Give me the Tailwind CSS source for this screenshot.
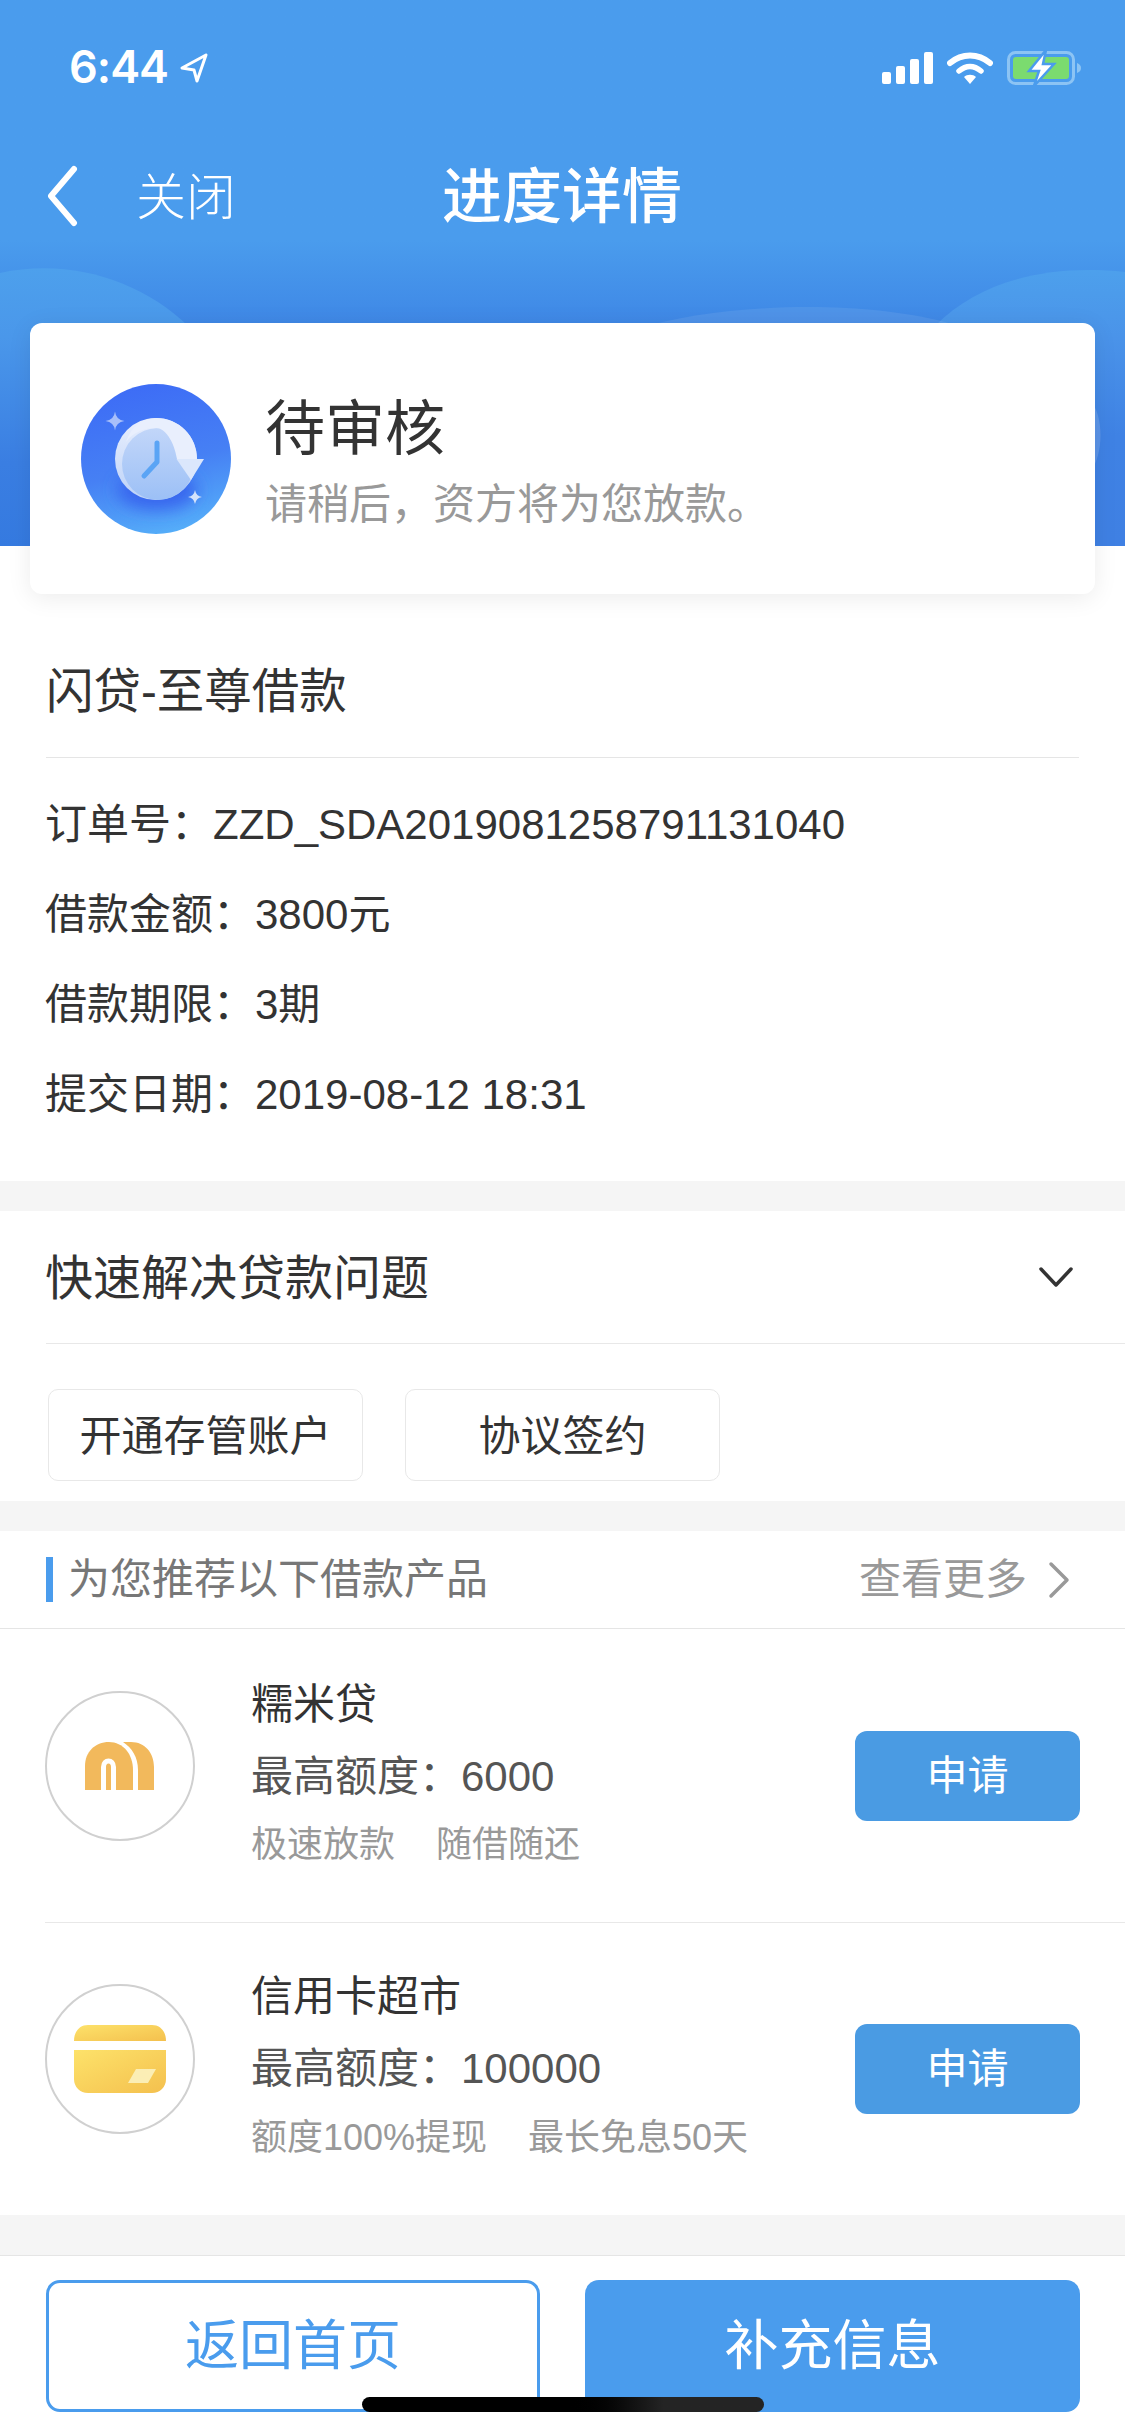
<!DOCTYPE html>
<html>
<head>
<title>进度详情</title>
<meta charset="UTF-8">
<meta name="viewport" content="width=device-width, initial-scale=1.0">
<script src="https://cdn.jsdelivr.net/npm/@tailwindcss/browser@4"></script>
</head>
<body class="bg-white font-['Liberation_Sans','Noto_Sans_CJK_SC',sans-serif] text-[#333333]">
<div class="relative w-[1125px] h-[2436px] overflow-hidden flex flex-col bg-white">

  <!-- header -->
  <div class="relative h-[546px] shrink-0 bg-gradient-to-b from-[#4a9ced] from-[44%] via-[#3f88e6] via-[59%] to-[#3f80e3] text-white">
    <svg class="absolute left-0 top-[260px]" width="1125" height="286" viewBox="0 0 1125 286">
      <defs>
        <linearGradient id="hill" x1="0" y1="0" x2="0" y2="1">
          <stop offset="0" stop-color="#4da0ec"/>
          <stop offset="0.25" stop-color="#4a97ea"/>
          <stop offset="0.7" stop-color="#3a7ee2"/>
          <stop offset="1" stop-color="#357ae0"/>
        </linearGradient>
        <linearGradient id="hillr" x1="0" y1="0" x2="0" y2="1">
          <stop offset="0" stop-color="#4da0ec"/>
          <stop offset="0.25" stop-color="#4a93e9"/>
          <stop offset="0.6" stop-color="#3f82e4"/>
          <stop offset="1" stop-color="#3f80e3"/>
        </linearGradient>
      </defs>
      <path d="M0 13 C70 -2 140 20 188 66 L188 286 L0 286 Z" fill="url(#hill)"/>
      <path d="M935 286 L935 66 C980 20 1050 4 1125 12 L1125 286 Z" fill="url(#hillr)"/>
      <path d="M640 68 C720 44 860 38 952 64 L952 100 L640 100 Z" fill="#ffffff" fill-opacity="0.08"/>
      <path d="M1090 140 C1104 155 1104 195 1090 212 Z" fill="#ffffff" fill-opacity="0.14"/>
    </svg>

    <div class="relative flex items-center justify-between h-[136px] pl-[69px] pr-[42px]">
      <div class="flex items-center gap-[11px]">
        <span class="-mt-[2px] text-[45px] font-semibold font-['Inter',sans-serif] tracking-[-1px]">6:44</span>
        <svg width="30" height="32" viewBox="0 0 30 32"><path d="M27 3 L3 16 L15 18 L18 29 Z" fill="none" stroke="#fff" stroke-width="3" stroke-linejoin="round"/></svg>
      </div>
      <div class="flex items-center gap-[14px]">
        <div class="flex items-end gap-[5px] h-[32px]">
          <div class="w-[9px] h-[12px] bg-white rounded-[2px]"></div>
          <div class="w-[9px] h-[18px] bg-white rounded-[2px]"></div>
          <div class="w-[9px] h-[25px] bg-white rounded-[2px]"></div>
          <div class="w-[9px] h-[32px] bg-white rounded-[2px]"></div>
        </div>
        <svg width="46" height="33" viewBox="0 0 46 33">
          <path d="M3 11 C15 1 31 1 43 11" fill="none" stroke="#fff" stroke-width="6" stroke-linecap="round"/>
          <path d="M12 19 C19 13 27 13 34 19" fill="none" stroke="#fff" stroke-width="5.5" stroke-linecap="round"/>
          <path d="M17 25 C20 22 26 22 29 25 L23 32 Z" fill="#fff"/>
        </svg>
        <svg width="76" height="36" viewBox="0 0 76 36">
          <rect x="1.5" y="2.5" width="65" height="31" rx="7" fill="none" stroke="#8cc4f4" stroke-width="3"/>
          <rect x="6" y="7" width="56" height="22" rx="3" fill="#7bdb6f"/>
          <path d="M70 13 C73 14 74 16 74 18 C74 20 73 22 70 23 Z" fill="#8cc4f4"/>
          <path d="M39 0 L22 21 L32 21 L27 36 L47 14 L36 14 Z" fill="#fff" stroke="#4a9ced" stroke-width="2.5"/>
        </svg>
      </div>
    </div>

    <div class="relative h-[120px] flex items-center pl-[46px]">
      <svg width="32" height="62" viewBox="0 0 32 62"><path d="M28 4 L5 31 L28 58" fill="none" stroke="#fff" stroke-width="6" stroke-linecap="round" stroke-linejoin="round"/></svg>
      <span class="ml-[58px] mt-[3px] text-[50px] font-light leading-none">关闭</span>
      <span class="absolute left-[442px] top-[32px] text-[60px] font-medium leading-none">进度详情</span>
    </div>
  </div>

  <!-- status card -->
  <div class="relative -mt-[223px] mx-[30px] h-[271px] shrink-0 flex items-center pl-[51px] bg-white rounded-[12px] shadow-[0_4px_24px_rgba(0,0,0,0.08)]">
    <svg width="150" height="150" viewBox="0 0 150 150">
      <defs>
        <linearGradient id="disc" x1="0.35" y1="0" x2="0.6" y2="1">
          <stop offset="0" stop-color="#3d6cf6"/>
          <stop offset="0.55" stop-color="#4680f4"/>
          <stop offset="1" stop-color="#55aef9"/>
        </linearGradient>
        <linearGradient id="ring" x1="0" y1="0" x2="0" y2="1">
          <stop offset="0" stop-color="#e9effd"/>
          <stop offset="1" stop-color="#bcd2f8"/>
        </linearGradient>
        <linearGradient id="face" x1="0" y1="0" x2="0" y2="1">
          <stop offset="0" stop-color="#c2d6f9"/>
          <stop offset="1" stop-color="#9cc0f6"/>
        </linearGradient>
        <filter id="glow" x="-30%" y="-50%" width="160%" height="200%">
          <feGaussianBlur stdDeviation="8"/>
        </filter>
        <clipPath id="discclip"><circle cx="75" cy="75" r="75"/></clipPath>
      </defs>
      <circle cx="75" cy="75" r="75" fill="url(#disc)"/>
      <ellipse cx="76" cy="106" rx="40" ry="20" fill="#3866ee" filter="url(#glow)" clip-path="url(#discclip)"/>
      <circle cx="75" cy="75" r="41" fill="url(#ring)"/>
      <circle cx="77" cy="80" r="36" fill="url(#face)"/>
      <path d="M75 34 C98 34 116 52 116 75 L96 75 C93 57 84 44 75 44 C64 44 52 48 45 58 C50 43 61 34 75 34 Z" fill="#e9effd"/>
      <path d="M95.5 75 L123 75 L110 96 Z" fill="#dbe7fc"/>
      <path d="M76 59 L76 78 L63 92" fill="none" stroke="#5aa4f5" stroke-width="5" stroke-linecap="round" stroke-linejoin="round"/>
      <path d="M34 27.5 Q35 36 43.5 37 Q35 38 34 46.5 Q33 38 24.5 37 Q33 36 34 27.5 Z" fill="#a8bffa"/>
      <path d="M114 106 Q115 112 121 113 Q115 114 114 120 Q113 114 107 113 Q113 112 114 106 Z" fill="#d5e3fb"/>
    </svg>
    <div class="ml-[34px] pt-[8px] flex flex-col">
      <span class="text-[60px] leading-[70px] text-[#333333]">待审核</span>
      <span class="mt-[15px] text-[42px] leading-[50px] text-[#999999]">请稍后，资方将为您放款。</span>
    </div>
  </div>

  <!-- order info -->
  <div class="mx-[46px] h-[164px] shrink-0 pt-[68px] border-b border-[#e5e5e5]">
    <h2 class="text-[47.5px] leading-[60px] font-normal">闪贷-至尊借款</h2>
  </div>
  <div class="pl-[45px] pt-[21px] h-[423px] shrink-0 text-[42px]">
    <div class="h-[90px] flex items-center">订单号：ZZD_SDA2019081258791131040</div>
    <div class="h-[90px] flex items-center">借款金额：3800元</div>
    <div class="h-[90px] flex items-center">借款期限：3期</div>
    <div class="h-[90px] flex items-center">提交日期：2019-08-12 18:31</div>
  </div>
  <div class="h-[30px] shrink-0 bg-[#f5f5f5]"></div>

  <!-- quick help -->
  <div class="ml-[46px] h-[133px] shrink-0 flex items-center justify-between pr-[52px] border-b border-[#e8e8e8]">
    <span class="-ml-[1px] pt-[4px] text-[48px]">快速解决贷款问题</span>
    <svg width="34" height="22" viewBox="0 0 34 22"><path d="M2 3 L17 19 L32 3" fill="none" stroke="#333" stroke-width="3.5" stroke-linecap="round" stroke-linejoin="round"/></svg>
  </div>
  <div class="flex gap-[42px] pl-[48px] pt-[45px] h-[157px] shrink-0">
    <div class="w-[315px] h-[92px] flex items-center justify-center rounded-[10px] border border-[#e8e8e8] pt-[2px] text-[42px]">开通存管账户</div>
    <div class="w-[315px] h-[92px] flex items-center justify-center rounded-[10px] border border-[#e8e8e8] pt-[2px] text-[42px]">协议签约</div>
  </div>
  <div class="h-[30px] shrink-0 bg-[#f5f5f5]"></div>

  <!-- recommended -->
  <div class="h-[98px] shrink-0 flex items-center pl-[46px] pr-[55px] border-b border-[#e5e5e5]">
    <div class="w-[7px] h-[45px] bg-[#4a9ced]"></div>
    <span class="ml-[15px] text-[42px] text-[#777777]">为您推荐以下借款产品</span>
    <span class="ml-auto text-[42px] text-[#999999]">查看更多</span>
    <svg class="ml-[21px]" width="22" height="38" viewBox="0 0 22 38"><path d="M3 3 L19 19 L3 35" fill="none" stroke="#999" stroke-width="3.5" stroke-linecap="round" stroke-linejoin="round"/></svg>
  </div>

  <div class="ml-[45px] h-[294px] shrink-0 flex items-start pr-[45px] border-b border-[#e8e8e8]">
    <div class="mt-[62px] w-[150px] h-[150px] shrink-0 flex items-center justify-center rounded-full border-2 border-[#d0d0d0]">
      <svg width="70" height="48" viewBox="0 0 70 48">
        <path d="M0 48 V24 C0 10 10 0 24 0 C38 0 48 12 48 28 V48 Z" fill="#f2b95c"/>
        <path d="M18.5 48 V25 C18.5 17 28.5 17 28.5 25 V48" fill="none" stroke="#ffffff" stroke-width="5"/>
        <path d="M38 0 H46 C60 0 69 11 69 25 V48 H53 V28 C53 15 47 6 38 0 Z" fill="#f2b95c"/>
      </svg>
    </div>
    <div class="ml-[56px] mt-[52px] flex flex-col">
      <span class="text-[42px] leading-[48px]">糯米贷</span>
      <span class="mt-[24px] text-[42px] leading-[48px] text-[#555555]">最高额度：6000</span>
      <div class="mt-[22px] flex gap-[41px] text-[36px] leading-[44px] text-[#999999]"><span>极速放款</span><span>随借随还</span></div>
    </div>
    <button class="ml-auto mt-[102px] w-[225px] h-[90px] pt-[2px] rounded-[12px] bg-[#4a9be3] text-white text-[41px]">申请</button>
  </div>

  <div class="ml-[45px] h-[292px] shrink-0 flex items-start pr-[45px]">
    <div class="mt-[61px] w-[150px] h-[150px] shrink-0 flex items-center justify-center rounded-full border-2 border-[#d0d0d0]">
      <svg width="92" height="68" viewBox="0 0 92 68">
        <defs>
          <linearGradient id="card" x1="0" y1="0" x2="1" y2="1">
            <stop offset="0" stop-color="#fde26a"/>
            <stop offset="1" stop-color="#f4c04e"/>
          </linearGradient>
        </defs>
        <path d="M0 16 C0 6 6 0 14 0 L78 0 C86 0 92 6 92 16 Z" fill="url(#card)"/>
        <path d="M0 25 L92 25 L92 54 C92 62 86 68 78 68 L14 68 C6 68 0 62 0 54 Z" fill="url(#card)"/>
        <path d="M62 44 L82 44 L74 58 L54 58 Z" fill="#fbeeb5"/>
      </svg>
    </div>
    <div class="ml-[56px] mt-[50px] flex flex-col">
      <span class="text-[42px] leading-[48px]">信用卡超市</span>
      <span class="mt-[24px] text-[42px] leading-[48px] text-[#555555]">最高额度：100000</span>
      <div class="mt-[23px] flex gap-[41px] text-[36px] leading-[44px] text-[#999999]"><span>额度100%提现</span><span>最长免息50天</span></div>
    </div>
    <button class="ml-auto mt-[101px] w-[225px] h-[90px] pt-[2px] rounded-[12px] bg-[#4a9be3] text-white text-[41px]">申请</button>
  </div>

  <div class="h-[41px] shrink-0 bg-[#f5f5f5] border-b border-[#e5e5e5]"></div>

  <!-- footer actions -->
  <div class="flex justify-between pl-[46px] pr-[45px] pt-[24px] shrink-0">
    <button class="w-[494px] h-[132px] rounded-[14px] border-[3px] border-[#4a9ced] text-[#4a9ced] text-[54px]">返回首页</button>
    <button class="w-[495px] h-[132px] rounded-[14px] bg-[#4a9ced] text-white text-[54px]">补充信息</button>
  </div>

  <div class="absolute left-[362px] top-[2397px] w-[402px] h-[15px] rounded-full bg-gradient-to-r from-black from-[50%] to-[#242424] to-[75%]"></div>
</div>
</body>
</html>
